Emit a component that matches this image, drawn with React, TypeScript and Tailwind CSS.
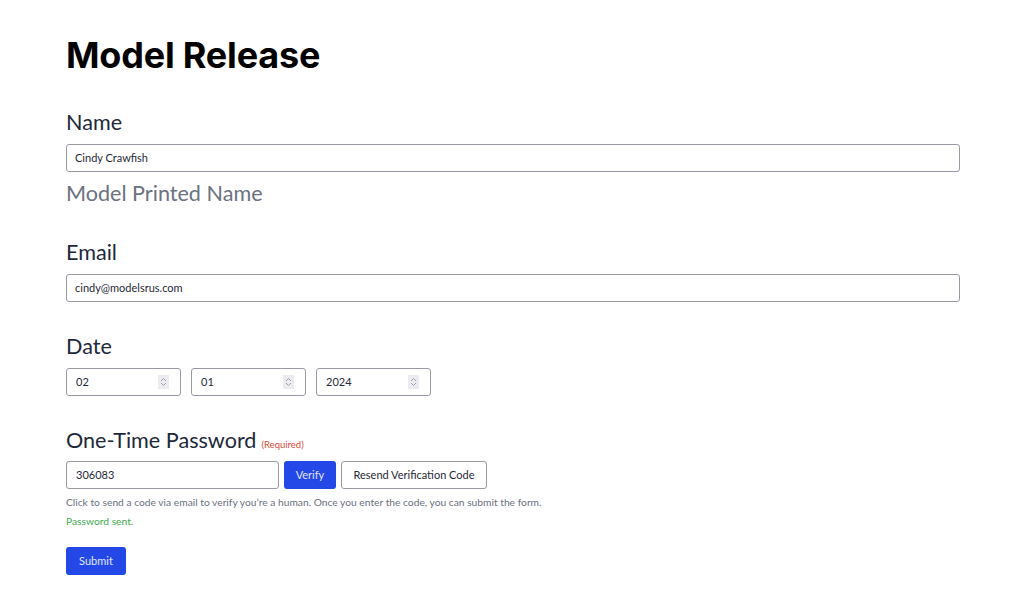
import React from "react";

const labelFont = { fontFamily: '"Lato", "Noto Sans", sans-serif' };

function Spinner() {
  return (
    <div className="w-[11px] h-[14px] bg-[#ececf0] flex items-center justify-center">
      <svg width="7" height="10" viewBox="0 0 7 10" fill="none" stroke="#9ca3af" strokeWidth="1">
        <path d="M1 4 L3.5 1.5 L6 4" />
        <path d="M1 6 L3.5 8.5 L6 6" />
      </svg>
    </div>
  );
}

function DateBox({ value }: { value: string }) {
  return (
    <div className="w-[115px] h-[28px] border border-[#9a9aa4] rounded-[3px] flex items-center justify-between pl-[9px] pr-[11px] text-[11px] text-[#1f2937]">
      <span>{value}</span>
      <Spinner />
    </div>
  );
}

export default function App() {
  return (
    <div className="w-[1024px] h-[592px] bg-white overflow-hidden" style={{ fontFamily: '"Inter", sans-serif' }}>
      <div className="pl-[66px] pr-[64px] pt-[33px]">
        <h1 className="text-[36px] font-bold text-black leading-[44px] tracking-[-0.2px]">Model Release</h1>

        <div className="mt-[32px]" style={labelFont}>
          <div className="text-[21.6px] text-[#1e293b] leading-[26px]">Name</div>
          <div className="mt-[9px] h-[28px] border border-[#9a9aa4] rounded-[3px] flex items-center pl-[8px] text-[11px] text-[#1f2937]">
            Cindy Crawfish
          </div>
          <div className="mt-[8px] text-[21.6px] text-[#6b7280] leading-[26px]">Model Printed Name</div>
        </div>

        <div className="mt-[33px]" style={labelFont}>
          <div className="text-[21.6px] text-[#1e293b] leading-[26px]">Email</div>
          <div className="mt-[9px] h-[28px] border border-[#9a9aa4] rounded-[3px] flex items-center pl-[8px] text-[11px] text-[#1f2937]">
            cindy@modelsrus.com
          </div>
        </div>

        <div className="mt-[31px]" style={labelFont}>
          <div className="text-[21.6px] text-[#1e293b] leading-[26px]">Date</div>
          <div className="mt-[9px] flex gap-[10px]">
            <DateBox value="02" />
            <DateBox value="01" />
            <DateBox value="2024" />
          </div>
        </div>

        <div className="mt-[31px]" style={labelFont}>
          <div className="flex items-baseline gap-[5px]">
            <span className="text-[21.6px] text-[#1e293b] leading-[26px]">One-Time Password</span>
            <span className="text-[9.5px] text-[#dc4a38]">(Required)</span>
          </div>
          <div className="mt-[8px] flex gap-[5px]">
            <div className="w-[213px] h-[28px] border border-[#9a9aa4] rounded-[3px] flex items-center pl-[9px] text-[11px] text-[#1f2937]">
              306083
            </div>
            <div className="w-[52px] h-[28px] bg-[#2447e8] rounded-[3px] flex items-center justify-center text-[11px] text-[#e0e7ff]">
              Verify
            </div>
            <div className="w-[146px] h-[28px] border border-[#9a9aa4] rounded-[3px] flex items-center justify-center text-[11px] text-[#1f2937]">
              Resend Verification Code
            </div>
          </div>
          <div className="mt-[6px] text-[10.25px] text-[#6b7280] leading-[14px]">
            Click to send a code via email to verify you’re a human. Once you enter the code, you can submit the form.
          </div>
          <div className="mt-[5px] text-[10.25px] text-[#3faa4e] leading-[14px]">Password sent.</div>
          <div className="mt-[19px] w-[60px] h-[28px] bg-[#2447e8] rounded-[3px] flex items-center justify-center text-[11px] text-[#e0e7ff]">
            Submit
          </div>
        </div>
      </div>
    </div>
  );
}
